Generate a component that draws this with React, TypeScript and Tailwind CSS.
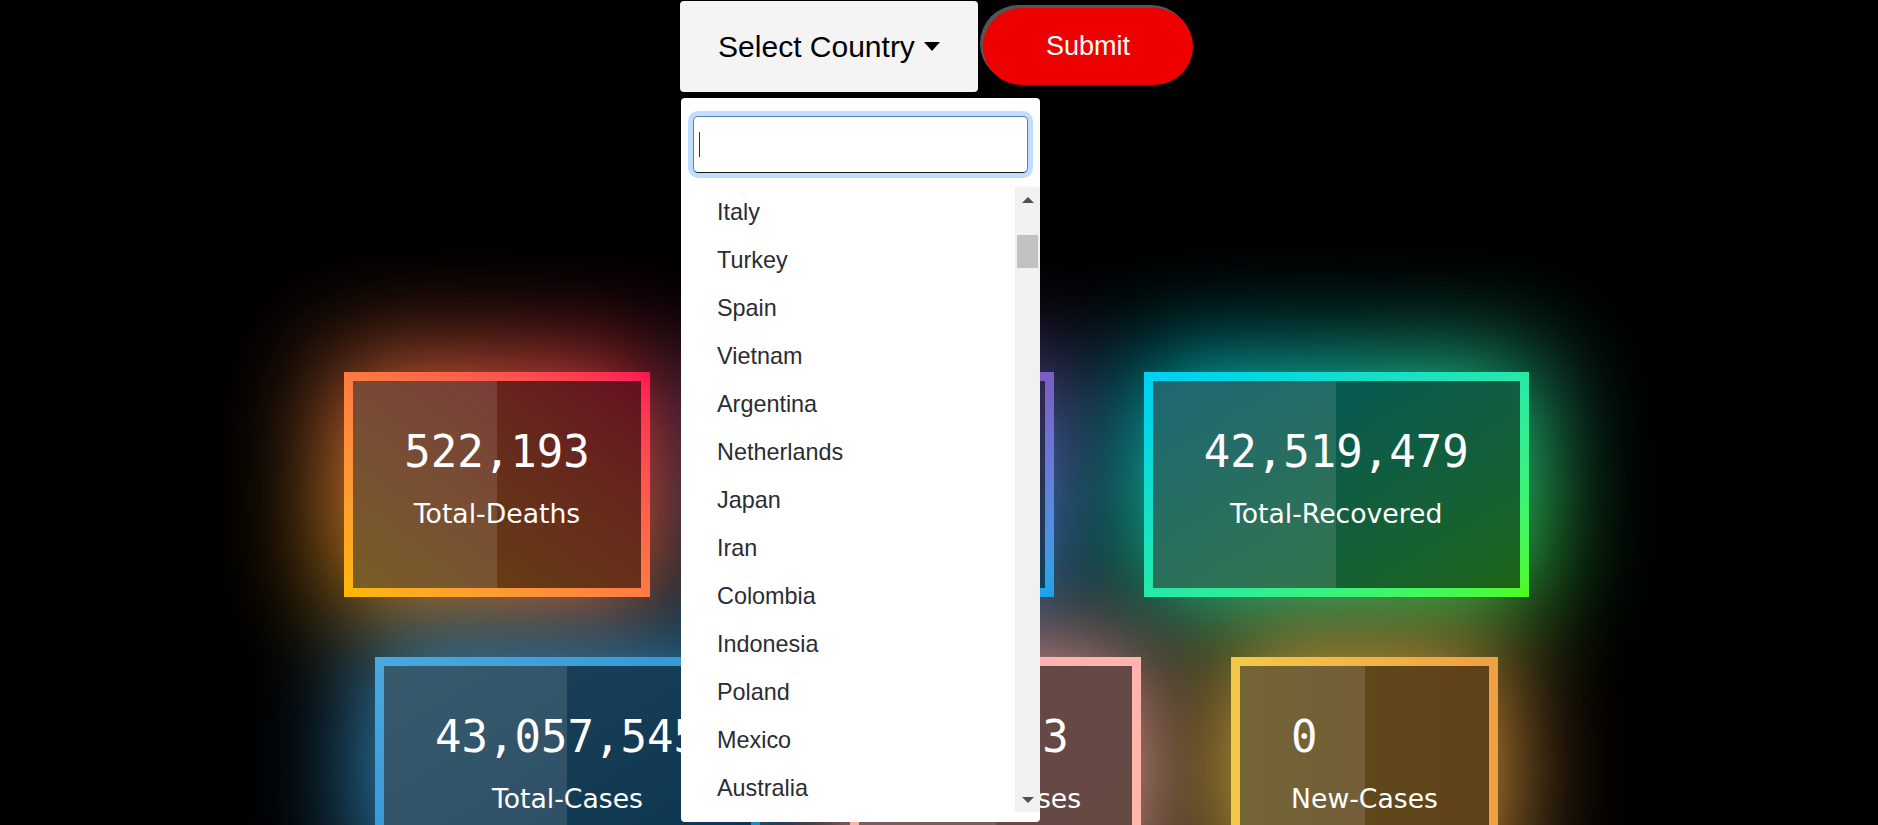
import React from "react";

type Stat = {
  value: string;
  label: string;
  grad: string;
  width?: string;
};

const countries = [
  "Italy",
  "Turkey",
  "Spain",
  "Vietnam",
  "Argentina",
  "Netherlands",
  "Japan",
  "Iran",
  "Colombia",
  "Indonesia",
  "Poland",
  "Mexico",
  "Australia",
];

const topRow: Stat[] = [
  { value: "522,193", label: "Total-Deaths", grad: "bg-linear-to-tr from-[#ffb800] to-[#ff1053]" },
  { value: "0", label: "New-Deaths", grad: "bg-linear-to-b from-[#7b5cc4] to-[#16a4ec]", width: "w-[314px]" },
  { value: "42,519,479", label: "Total-Recovered", grad: "bg-linear-to-br from-[#00cff5] to-[#4efc0c]" },
];

const bottomRow: Stat[] = [
  { value: "43,057,545", label: "Total-Cases", grad: "bg-linear-to-br from-[#4aa9de] to-[#1582c8]" },
  { value: "15,873", label: "Active-Cases", grad: "bg-linear-to-br from-[#ffb0b4] to-[#ffb8a6]" },
  { value: "0", label: "New-Cases", grad: "bg-linear-to-r from-[#f3c94a] to-[#eea042]" },
];

const StatCard = ({ stat }: { stat: Stat }) => (
  <div className={`relative p-[9px] ${stat.grad} ${stat.width ?? ""}`}>
    {/* glow */}
    <div className={`absolute -inset-3 -z-10 opacity-90 blur-[55px] ${stat.grad}`} />
    <div className="relative flex justify-center bg-black/60 px-[51px] pt-[45px] pb-[58px] text-white">
      <div className="absolute inset-y-0 left-0 w-1/2 bg-white/[0.12]" />
      <div className="relative">
        <div className="font-['DejaVu_Sans_Mono',monospace] text-[44px] leading-[52px]">{stat.value}</div>
        <div className="mt-[20px] text-center font-['DejaVu_Sans',sans-serif] text-[26.67px] leading-[32px]">
          {stat.label}
        </div>
      </div>
    </div>
  </div>
);

const Arrow = ({ up }: { up?: boolean }) => (
  <svg width="12" height="6" viewBox="0 0 12 6">
    <path d={up ? "M0 6h12L6 0z" : "M0 0h12L6 6z"} fill="#505050" />
  </svg>
);

export default function App() {
  return (
    <div className="relative isolate h-screen overflow-hidden bg-black pr-[5px] pt-[1px] font-['Liberation_Sans',Arial,sans-serif]">
      <div className="flex items-center justify-center gap-[5px]">
        <div className="relative">
          <button className="flex h-[91px] w-[298px] items-center justify-center rounded-[4px] bg-[#f4f4f4] text-[30px] text-black">
            Select Country
            <svg className="ml-[9px] mt-[-1px]" width="16" height="9" viewBox="0 0 16 9">
              <path d="M0 0h16L8 9z" fill="#000" />
            </svg>
          </button>

          <div className="absolute left-[1px] top-[97px] z-50 w-[359px] rounded-[4px] bg-white pb-[10px] pt-[18px]">
            <div className="relative mx-[12px] h-[57px]">
              <input
                type="text"
                className="h-full w-full rounded-[5px] border border-[#5b7fa8] border-b-[#1a1a1a] bg-white px-3 text-[23px] text-[#495057] shadow-[0_0_0_5px_#bfdeff] outline-none"
              />
              <span className="absolute left-[6px] top-[16px] h-[25px] w-px bg-[#333]" />
            </div>

            <div className="mt-[14px] flex h-[625px]">
              <ul className="flex-1 overflow-hidden pt-px">
                {countries.map((c) => (
                  <li key={c} className="h-[48px] pl-[36px] text-[23.4px] leading-[48px] text-[#2a2d31]">
                    {c}
                  </li>
                ))}
              </ul>
              <div className="flex w-[25px] flex-col bg-[#f1f1f1]">
                <div className="flex h-[25px] items-center justify-center">
                  <Arrow up />
                </div>
                <div className="flex-1 px-[2px]">
                  <div className="mt-[23px] h-[33px] bg-[#c1c1c1]" />
                </div>
                <div className="flex h-[25px] items-center justify-center">
                  <Arrow />
                </div>
              </div>
            </div>
          </div>
        </div>

        <button className="h-[77px] w-[210px] rounded-full bg-[#ee0000] text-[27px] text-white shadow-[-3px_-3px_0_0_#555]">
          Submit
        </button>
      </div>

      <div className="mt-[280px] flex flex-col gap-[60px]">
        <div className="flex justify-center gap-[90px]">
          {topRow.map((s) => (
            <StatCard key={s.label} stat={s} />
          ))}
        </div>
        <div className="flex justify-center gap-[90px]">
          {bottomRow.map((s) => (
            <StatCard key={s.label} stat={s} />
          ))}
        </div>
      </div>
    </div>
  );
}
